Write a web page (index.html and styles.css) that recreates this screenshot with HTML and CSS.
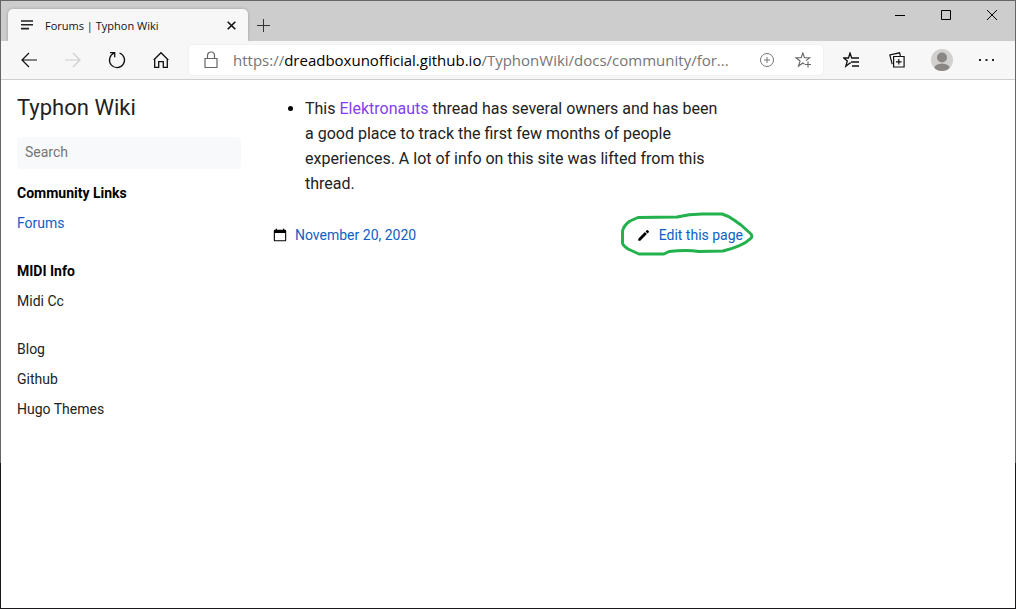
FILE: index.html
```html
<!DOCTYPE html>
<html lang="en">
<head>
<meta charset="utf-8">
<meta name="viewport" content="width=device-width, initial-scale=1">
<title>Forums | Typhon Wiki</title>
<link rel="stylesheet" href="styles.css">
</head>
<body>
<div class="window">
  <header class="titlebar">
    <div class="tab">
      <svg class="tab-icon" width="12" height="10" viewBox="0 0 12 10" stroke="#222" stroke-width="1.6"><path d="M0 1h12M0 4.800h12M0 8.600h8"/></svg>
      <span class="tab-title">Forums | Typhon Wiki</span>
      <button class="tab-close" aria-label="Close tab"><svg width="9" height="9" viewBox="0 0 9 9" stroke="#111" stroke-width="1.6"><path d="M.7.7l7.600 7.600M8.300.7L.7 8.300"/></svg></button>
    </div>
    <button class="new-tab" aria-label="New tab"><svg width="13" height="13" viewBox="0 0 13 13" stroke="#333"><path d="M6.500 0v13M0 6.500h13"/></svg></button>
    <div class="window-controls">
      <button class="control" aria-label="Minimize"><svg width="10" height="11" viewBox="0 0 10 11" stroke="#000"><path d="M0 5.500h10"/></svg></button>
      <button class="control" aria-label="Maximize"><svg width="10" height="10" viewBox="0 0 10 10" fill="none" stroke="#000"><path d="M.5.5h9v9h-9z"/></svg></button>
      <button class="control" aria-label="Close"><svg width="10" height="10" viewBox="0 0 10 10" stroke="#000"><path d="M0 0l10 10M10 0L0 10"/></svg></button>
    </div>
  </header>

  <nav class="toolbar" aria-label="Browser toolbar">
    <div class="nav-buttons">
      <button class="tool" aria-label="Back"><svg width="16" height="16" viewBox="0 0 16 16" fill="none" stroke="#111" stroke-width="1.2"><path d="M16 8H1M8 1L1 8l7 7"/></svg></button>
      <button class="tool" aria-label="Forward" disabled><svg width="16" height="16" viewBox="0 0 16 16" fill="none" stroke="#cdcdcd" stroke-width="1.2"><path d="M0 8h15M8 1l7 7-7 7"/></svg></button>
      <button class="tool" aria-label="Refresh"><svg width="18" height="18" viewBox="0 0 18 18" fill="none" stroke="#111" stroke-width="1.3"><path d="M11.500 2A7.500 7.500 0 1 1 6 2.200M2 1.700h4.700v4.600"/></svg></button>
      <button class="tool" aria-label="Home"><svg width="16" height="18" viewBox="0 0 16 18" fill="none" stroke="#111" stroke-width="1.3"><path d="M1.700 8v8.400h4v-5.800h4.600v5.800h4V8M.7 9L8 1.700 15.300 9"/></svg></button>
    </div>
    <div class="address">
      <svg width="14" height="18" viewBox="0 0 14 18" fill="none" stroke="#666" stroke-width="1.2"><path d="M1 7.500h12v9H1zM3.500 7.500V4.500a3.500 3.500 0 0 1 7 0v3"/></svg>
      <div class="url" role="textbox" aria-label="Address" tabindex="0">https://<span class="host">dreadboxunofficial.github.io</span>/TyphonWiki/docs/community/for...</div>
      <button class="address-button" aria-label="Zoom"><svg width="14" height="14" viewBox="0 0 14 14" fill="none" stroke="#777"><circle cx="7" cy="7" r="6.500"/><path d="M7 4v6M4 7h6"/></svg></button>
      <button class="address-button" aria-label="Add to favorites"><svg width="17" height="16" viewBox="0 0 17 16" fill="none" stroke="#666" stroke-width="1.100"><path d="M9.500 12.200L7.800 11l-4.300 3 1.600-5L1 5.800h5.100L7.800 1l1.700 4.800h5.100L11 8.600M13 9.500v6M10 12.500h6"/></svg></button>
    </div>
    <div class="nav-buttons nav-buttons-end">
      <button class="tool" aria-label="Favorites"><svg width="17" height="16" viewBox="0 0 17 16" fill="none" stroke="#111" stroke-width="1.300"><path d="M7.800 11.400L7 11l-4.200 3.200L4.300 9 .8 6h4.700L7 1l1.700 5H16M8 10h8M9 14h7"/></svg></button>
      <button class="tool" aria-label="Collections"><svg width="16" height="16" viewBox="0 0 16 16" fill="none" stroke="#111" stroke-width="1.200"><path d="M4.600 4.500h10.500v10.500H4.600zM9.800 7v5.500M7 9.800h5.600M3.200 12.200L.8 3 10.600.8l.8 3.200"/></svg></button>
      <button class="tool" aria-label="Profile"><svg width="22" height="22" viewBox="0 0 22 22"><defs><clipPath id="avatar"><circle cx="11" cy="11" r="11"/></clipPath></defs><circle cx="11" cy="11" r="11" fill="#d2d0ce"/><g fill="#8a8684" clip-path="url(#avatar)"><circle cx="11" cy="8.500" r="5"/><ellipse cx="11" cy="20" rx="8" ry="5.500"/></g></svg></button>
      <button class="tool" aria-label="Settings and more"><svg width="15" height="2" viewBox="0 0 15 2" fill="#222"><path d="M0 0h2v2H0zM6.500 0h2v2h-2zM13 0h2v2h-2z"/></svg></button>
    </div>
  </nav>

  <div class="page">
    <aside class="sidebar">
      <h1 class="brand">Typhon Wiki</h1>
      <input class="search" type="search" placeholder="Search" aria-label="Search">
      <nav class="menu" aria-label="Wiki">
        <section class="group">
          <h2 class="group-title">Community Links</h2>
          <a class="menu-link active" href="#forums">Forums</a>
        </section>
        <section class="group">
          <h2 class="group-title">MIDI Info</h2>
          <a class="menu-link" href="#midi">Midi Cc</a>
        </section>
        <section class="group">
          <a class="menu-link" href="#blog">Blog</a>
          <a class="menu-link" href="#github">Github</a>
          <a class="menu-link" href="#themes">Hugo Themes</a>
        </section>
      </nav>
    </aside>
    <main class="content">
      <ul class="list">
        <li>This <a class="visited" href="#elektronauts">Elektronauts</a> thread has several owners and has been a good place to track the first few months of people experiences. A lot of info on this site was lifted from this thread.</li>
      </ul>
      <footer class="meta">
        <a class="meta-link" href="#history"><svg width="14" height="14" viewBox="0 0 14 14"><path fill="#000" d="M2.700.8H4v1h6v-1h1.300v1h.8c.6 0 1.100.5 1.100 1.100v9.300c0 .6-.5 1.100-1.100 1.100H1.900c-.6 0-1.100-.5-1.100-1.100V2.900c0-.6.5-1.100 1.100-1.100h.8zM1.900 5v7.200h10.200V5z"/></svg>November 20, 2020</a>
        <a class="meta-link edit" href="#edit"><svg width="14" height="14" viewBox="0 0 14 14"><path fill="#000" d="M1.300 10.700L7.900 4.100l2 2-6.600 6.600h-2zM8.600 3.400l1.200-1.200c.3-.3.700-.3 1 0l1 1c.3.300.3.700 0 1l-1.200 1.200z"/></svg>Edit this page<svg class="loop" width="138" height="48" viewBox="0 0 138 48" fill="none" stroke="#22b14c" stroke-width="3" stroke-linejoin="round" stroke-linecap="round"><path d="M20 7.500L59 7q12-3 25-3h20q7 2 12 6l7 5 10 9q2 3-1 5-7 7-27 12l-24 .5q-12-2-30 0l-5 2.500H21L10 39Q4 35 4.500 32V21Q6 15 12 11z"/></svg></a>
      </footer>
    </main>
  </div>
</div>
</body>
</html>
```

FILE: styles.css
```css
* { box-sizing: border-box; }

body {
  margin: 0;
  font-family: Roboto, "Liberation Sans", sans-serif;
  color: #222;
}

button {
  display: flex;
  align-items: center;
  justify-content: center;
  padding: 0;
  border: 0;
  background: none;
}

a { color: #1060c4; text-decoration: none; }
svg { flex: none; }

.window {
  display: flex;
  flex-direction: column;
  min-height: 100vh;
  padding: 1px;
  background: linear-gradient(#666 0 76%, #1a181b 76%);
}

.titlebar {
  display: flex;
  align-items: flex-end;
  height: 40px;
  padding-left: 7px;
  background: #cdcdcd;
  font-family: "Open Sans", "Noto Sans", sans-serif;
}

.tab {
  display: flex;
  align-items: center;
  width: 240px;
  height: 32px;
  padding: 0 12px 0 13px;
  border-radius: 5px 5px 0 0;
  background: #f7f7f7;
  box-shadow: 0 0 3px #999;
  clip-path: inset(-4px -4px 0 -4px);
}

.tab-title {
  flex: 1;
  padding-left: 12px;
  font-size: 11px;
  color: #111;
}

.new-tab { width: 30px; height: 32px; }

.window-controls {
  display: flex;
  align-self: flex-start;
  margin-left: auto;
}

.control { width: 46px; height: 28px; }

.toolbar {
  display: flex;
  align-items: center;
  height: 39px;
  padding: 0 6px;
  border-bottom: 1px solid #cfcfcf;
  background: #f7f7f7;
}

.nav-buttons { display: flex; }
.tool { width: 44px; height: 36px; }
.nav-buttons-end .tool { width: 45px; }

.address {
  display: flex;
  flex: 1;
  align-items: center;
  min-width: 0;
  height: 30px;
  margin: 0 6px;
  padding: 0 8px 0 15px;
  border-radius: 4px;
  background: #fff;
  box-shadow: 0 0 2px #e4e4e4;
}

.url {
  flex: 1;
  min-width: 0;
  padding-left: 15px;
  overflow: hidden;
  font-family: "Open Sans", "Noto Sans", sans-serif;
  font-size: 15px;
  white-space: nowrap;
  color: #757575;
}

.host { color: #000; }
.address-button { width: 24px; height: 30px; }
.address-button + .address-button { margin-left: 12px; }

.page {
  display: grid;
  flex: 1;
  grid-template-columns: 256px minmax(0, 1fr) 256px;
  background: #fff;
}

.sidebar { padding: 16px; font-size: 14px; }

.brand {
  margin: 0;
  font-size: 22px;
  font-weight: 400;
  line-height: 24px;
}

.search {
  display: block;
  width: 100%;
  height: 32px;
  margin: 17px 0 9px;
  padding: 0 8px 2px;
  border: 0;
  border-radius: 4px;
  background: #f8f9fa;
  font: 14px Roboto, sans-serif;
}

.search::placeholder { color: #757575; }

.group { margin-bottom: 18px; }

.group-title,
.menu-link {
  display: block;
  margin: 0;
  font-size: 14px;
  line-height: 30px;
  color: #222;
}

.group-title { font-weight: 700; color: #000; }
.menu-link.active { color: #1060c4; }

.content { padding: 16px; }

.list {
  margin: 0;
  padding: 0 20px 0 32px;
  font-size: 16px;
  line-height: 25px;
}

.list li::marker { color: #000; }
.visited { color: #8440f1; }

.meta {
  display: flex;
  justify-content: space-between;
  margin-top: 27px;
  font-size: 14px;
  line-height: 24px;
}

.meta-link {
  display: flex;
  align-items: center;
  gap: 8px;
}

.edit { position: relative; }

.loop {
  position: absolute;
  top: -13px;
  right: -13px;
  pointer-events: none;
}
```
